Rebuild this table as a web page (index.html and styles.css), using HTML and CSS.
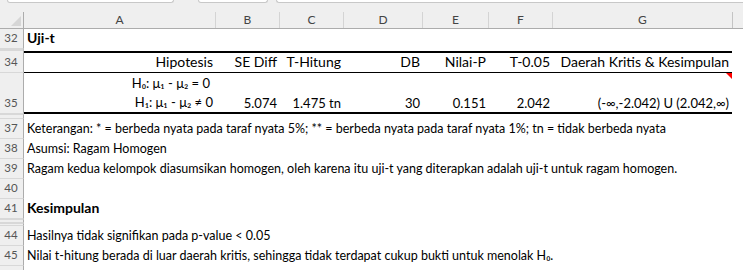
FILE: index.html
```html
<!DOCTYPE html>
<html lang="id">
<head>
<meta charset="utf-8">
<title>Uji-t</title>
<link rel="stylesheet" href="styles.css">
</head>
<body>
<div class="sheet">
  <div class="topbar">
    <div class="fbox fbox-name"></div>
    <div class="fbox fbox-mid"></div>
    <div class="fbox fbox-formula"></div>
  </div>
  <div class="colhdr">
    <div class="corner"><span class="corner-tri"></span></div>
    <div class="ch ch-a">A</div>
    <div class="ch ch-b">B</div>
    <div class="ch ch-c">C</div>
    <div class="ch ch-d">D</div>
    <div class="ch ch-e">E</div>
    <div class="ch ch-f">F</div>
    <div class="ch ch-g">G</div>
    <div class="ch ch-h"></div>
  </div>

  <div class="row h20"><div class="rh">32</div><div class="cells"><span class="txt bold">Uji-t</span></div></div>
  <div class="row h2 hidden-row"><div class="rh"></div><div class="cells"></div></div>

  <div class="row h22"><div class="rh">34</div>
    <div class="cells">
      <div class="tbl tbl-head">
        <div class="c">Hipotesis</div>
        <div class="c">SE Diff</div>
        <div class="c">T-Hitung</div>
        <div class="c">DB</div>
        <div class="c">Nilai-P</div>
        <div class="c">T-0.05</div>
        <div class="c">Daerah Kritis &amp; Kesimpulan</div>
      </div>
    </div>
  </div>

  <div class="row h41"><div class="rh">35</div>
    <div class="cells">
      <div class="tbl tbl-body">
        <div class="c c-hyp"><span class="h0">H₀: μ₁ - μ₂ = 0</span><span>H₁: μ₁ - μ₂ ≠ 0</span></div>
        <div class="c num">5.074</div>
        <div class="c num">1.475 tn</div>
        <div class="c num">30</div>
        <div class="c num">0.151</div>
        <div class="c num">2.042</div>
        <div class="c num c-note">(-∞,-2.042) U (2.042,∞)<span class="comment-mark"></span></div>
      </div>
    </div>
  </div>
  <div class="row h5 hidden-row"><div class="rh"></div><div class="cells"></div></div>

  <div class="row h20"><div class="rh">37</div><div class="cells"><span class="txt">Keterangan: * = berbeda nyata pada taraf nyata 5%; ** = berbeda nyata pada taraf nyata 1%; tn = tidak berbeda nyata</span></div></div>
  <div class="row h20"><div class="rh">38</div><div class="cells"><span class="txt">Asumsi: Ragam Homogen</span></div></div>
  <div class="row h20"><div class="rh">39</div><div class="cells"><span class="txt">Ragam kedua kelompok diasumsikan homogen, oleh karena itu uji-t yang diterapkan adalah uji-t untuk ragam homogen.</span></div></div>
  <div class="row h20"><div class="rh">40</div><div class="cells"></div></div>
  <div class="row h20"><div class="rh">41</div><div class="cells"><span class="txt bold">Kesimpulan</span></div></div>
  <div class="row h4 hidden-row"><div class="rh"></div><div class="cells"></div></div>
  <div class="row h3 hidden-row"><div class="rh"></div><div class="cells"></div></div>
  <div class="row h20"><div class="rh">44</div><div class="cells"><span class="txt">Hasilnya tidak signifikan pada p-value &lt; 0.05</span></div></div>
  <div class="row h20"><div class="rh">45</div><div class="cells"><span class="txt">Nilai t-hitung berada di luar daerah kritis, sehingga tidak terdapat cukup bukti untuk menolak H₀.</span></div></div>
  <div class="row h4"><div class="rh rh-last"></div><div class="cells"></div></div>
</div>
</body>
</html>
```
FILE: styles.css
```css
* { box-sizing: border-box; }
html, body { margin: 0; padding: 0; background: #ffffff; }
body {
  width: 743px;
  height: 270px;
  overflow: hidden;
  font-family: Lato, "Noto Sans", "DejaVu Sans", sans-serif;
  font-size: 12.5px;
  color: #000;
}
.sheet { width: 743px; }

/* top strip (bottom of formula bar) */
.topbar {
  height: 12px;
  background: #efefef;
  display: flex;
  align-items: flex-start;
}
.fbox {
  height: 3px;
  background: #ffffff;
  border: 1px solid #c8c8c8;
  border-top: none;
  border-radius: 0 0 3px 3px;
}
.fbox-name { margin-left: 7px; width: 167px; }
.fbox-mid { margin-left: 24px; width: 70px; }
.fbox-formula { margin-left: 8px; flex: 1; border-right: none; border-radius: 0 0 0 3px; }

/* column header */
.colhdr {
  height: 17px;
  display: flex;
  background: #efefef;
  border-bottom: 1px solid #acacac;
  color: #444;
  font-size: 12px;
}
.corner {
  width: 24px;
  flex: none;
  position: relative;
  border-right: 1px solid #acacac;
}
.corner-tri {
  position: absolute;
  right: 2px;
  bottom: 2px;
  width: 0;
  height: 0;
  border-bottom: 10px solid #d6d6d6;
  border-left: 10px solid transparent;
}
.ch {
  flex: none;
  display: flex;
  align-items: center;
  justify-content: center;
  border-right: 1px solid #d4d4d4;
  line-height: 16px;
}
.ch-a { width: 192px; }
.ch-b { width: 64px; }
.ch-c { width: 64px; }
.ch-d { width: 79px; }
.ch-e { width: 66px; }
.ch-f { width: 64px; }
.ch-g { width: 180px; border-right-color: #c4c4c4; }
.ch-h { flex: 1; border-right: none; }

/* rows */
.row { display: flex; }
.h20 { height: 20px; }
.h22 { height: 22px; }
.h41 { height: 41px; }
.h2 { height: 2px; }
.h3 { height: 3px; }
.h4 { height: 4px; }
.h5 { height: 5px; }

.rh {
  width: 24px;
  flex: none;
  background: #efefef;
  border-right: 1px solid #acacac;
  border-bottom: 1px solid #d8d8d8;
  color: #555;
  font-size: 11.5px;
  line-height: 14px;
  display: flex;
  align-items: flex-end;
  justify-content: center;
  padding-bottom: 3px;
  padding-right: 1px;
}
.hidden-row .rh { border-top: 1px solid #d8d8d8; padding-bottom: 0; }
.rh-last { border-bottom: none; padding-bottom: 0; }

.cells {
  flex: 1;
  display: flex;
  align-items: flex-end;
  position: relative;
  white-space: nowrap;
}
.txt {
  padding-left: 3px;
  padding-bottom: 1px;
  line-height: 18px;
}
.bold { font-weight: 700; font-size: 14px; padding-bottom: 2px; }

/* table */
.tbl {
  display: grid;
  grid-template-columns: 192px 64px 64px 79px 66px 64px 179px;
  height: 100%;
  width: 708px;
  font-size: 14px;
}
.tbl-head {
  border-top: 2px solid #000;
  border-bottom: 1px solid #000;
}
.tbl-body {
  border-bottom: 2px solid #000;
}
.c {
  display: flex;
  flex-direction: column;
  justify-content: flex-end;
  align-items: flex-end;
  text-align: right;
  padding-right: 3px;
  padding-bottom: 1px;
  line-height: 18px;
  position: relative;
}
.tbl-body .c { padding-bottom: 0; }
.num { font-size: 13px; }
.c-hyp { line-height: 19px; font-size: 13px; }
.c-hyp .h0 { padding-right: 3px; }
.comment-mark {
  position: absolute;
  top: 0;
  right: 0;
  width: 0;
  height: 0;
  border-top: 6px solid #ff0000;
  border-left: 6px solid transparent;
}
```
